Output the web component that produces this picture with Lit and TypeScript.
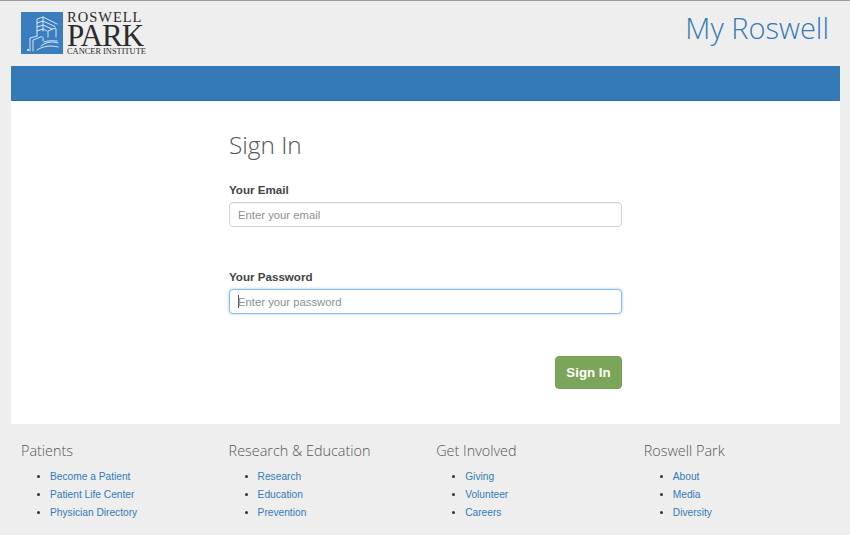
import { LitElement, html, css } from "lit";
import { customElement } from "lit/decorators.js";

const columns = [
  { title: "Patients", links: ["Become a Patient", "Patient Life Center", "Physician Directory"] },
  { title: "Research & Education", links: ["Research", "Education", "Prevention"] },
  { title: "Get Involved", links: ["Giving", "Volunteer", "Careers"] },
  { title: "Roswell Park", links: ["About", "Media", "Diversity"] },
];

@customElement("app-root")
export class AppRoot extends LitElement {
  static styles = css`
    :host { display: block; width: 850px; height: 535px; overflow: hidden; background: #eeeeee; font-family: "Liberation Sans", Arial, sans-serif; color: #333; }
    .page { height: 535px; box-sizing: border-box; border-top: 1px solid #9a9a9a; }
    header { height: 65px; display: flex; justify-content: space-between; box-sizing: border-box; padding: 11px 21px 0 21px; }
    .logo { display: flex; gap: 4px; }
    .logo svg { width: 42px; height: 42px; display: block; }
    .wordmark { font-family: "Liberation Serif", serif; color: #2b2b2b; display: flex; flex-direction: column; width: 82px; }
    .w1 { font-size: 14.5px; line-height: 11px; height: 11px; letter-spacing: 1px; white-space: nowrap; }
    .w2 { font-size: 31px; line-height: 25px; height: 25px; letter-spacing: -.9px; white-space: nowrap; }
    .w3 { font-size: 8.4px; line-height: 7px; white-space: nowrap; }
    .brand { font-family: "Open Sans", sans-serif; font-weight: 300; font-size: 29px; line-height: 36px; color: #337ab7; margin-top: -2px; }
    .shell { margin: 0 10px 0 11px; background: #fff; }
    .band { height: 35px; background: #337ab7; border-bottom: 1px solid #2e72ad; box-sizing: border-box; }
    .form { height: 323px; box-sizing: border-box; padding: 26px 218px 0 218px; display: flex; flex-direction: column; }
    h1 { margin: 0; font-family: "Open Sans", sans-serif; font-weight: 300; font-size: 24.4px; line-height: 36px; color: #555; }
    label { font-size: 11.6px; font-weight: 700; line-height: 16px; color: #444; margin-top: 19px; display: block; }
    label.second { margin-top: 42px; }
    .input { height: 25px; box-sizing: border-box; margin-top: 4px; border: 1px solid #d2d2d2; border-radius: 4px; padding-left: 8px; display: flex; align-items: center; font-size: 11.3px; color: #8f8f8f; background: #fff; box-shadow: inset 0 1px 1px rgba(0,0,0,.05); }
    .input.focus { border-color: #8dbbe8; box-shadow: 0 0 3px rgba(102,175,233,.65); }
    .caret { width: 1px; height: 13px; background: #555; margin-right: -1px; }
    .actions { display: flex; justify-content: flex-end; margin-top: 42px; }
    button { width: 67px; height: 33px; border: 1px solid #76a052; border-radius: 4px; background: #7ba558; color: #fff; font-family: "Liberation Sans", Arial, sans-serif; font-size: 13.3px; font-weight: 700; padding: 0; }
    footer { display: grid; grid-template-columns: repeat(4, 207.6px); padding: 16px 0 0 21px; }
    h2 { margin: 0; font-family: "Open Sans", sans-serif; font-weight: 300; font-size: 14.4px; line-height: 22px; color: #555; }
    ul { margin: 6px 0 0 0; padding: 0 0 0 29px; list-style: disc; font-size: 10.2px; line-height: 18.2px; color: #333; }
    a { color: #337ab7; text-decoration: none; }
  `;

  render() {
    return html`
      <div class="page">
        <header>
          <div class="logo">
            <svg viewBox="0 0 42 42" fill="none" stroke="#e8f0f8" stroke-width=".9" stroke-linecap="round">
              <rect width="42" height="42" fill="#3a7ebf" stroke="none" />
              <path d="M16 24V7l6-2 14 7" />
              <path d="M16 11l6-2 12 5.500M16 15l6-2 9 4M16 19l6-2 4 2" />
              <path d="M22 5v14" />
              <path d="M27 25V19l7-3 1 .5V25" />
              <path d="M9 39V26l7-2M12 39V28l9-3.500 1 1V29" />
              <path d="M20 34c5-4 11-5 17-3M16 38c6-4 14-5 21-3M23 30c4-1.500 8-1.500 13-1" />
              <circle cx="7" cy="38" r=".7" />
            </svg>
            <div class="wordmark">
              <div class="w1">ROSWELL</div>
              <div class="w2">PARK</div>
              <div class="w3">CANCER INSTITUTE</div>
            </div>
          </div>
          <div class="brand">My Roswell</div>
        </header>
        <main class="shell">
          <div class="band"></div>
          <div class="form">
            <h1>Sign In</h1>
            <label>Your Email</label>
            <div class="input">Enter your email</div>
            <label class="second">Your Password</label>
            <div class="input focus"><span class="caret"></span>Enter your password</div>
            <div class="actions"><button>Sign In</button></div>
          </div>
        </main>
        <footer>
          ${columns.map(
            (c) => html`<section>
              <h2>${c.title}</h2>
              <ul>${c.links.map((l) => html`<li><a href="#">${l}</a></li>`)}</ul>
            </section>`
          )}
        </footer>
      </div>
    `;
  }
}
